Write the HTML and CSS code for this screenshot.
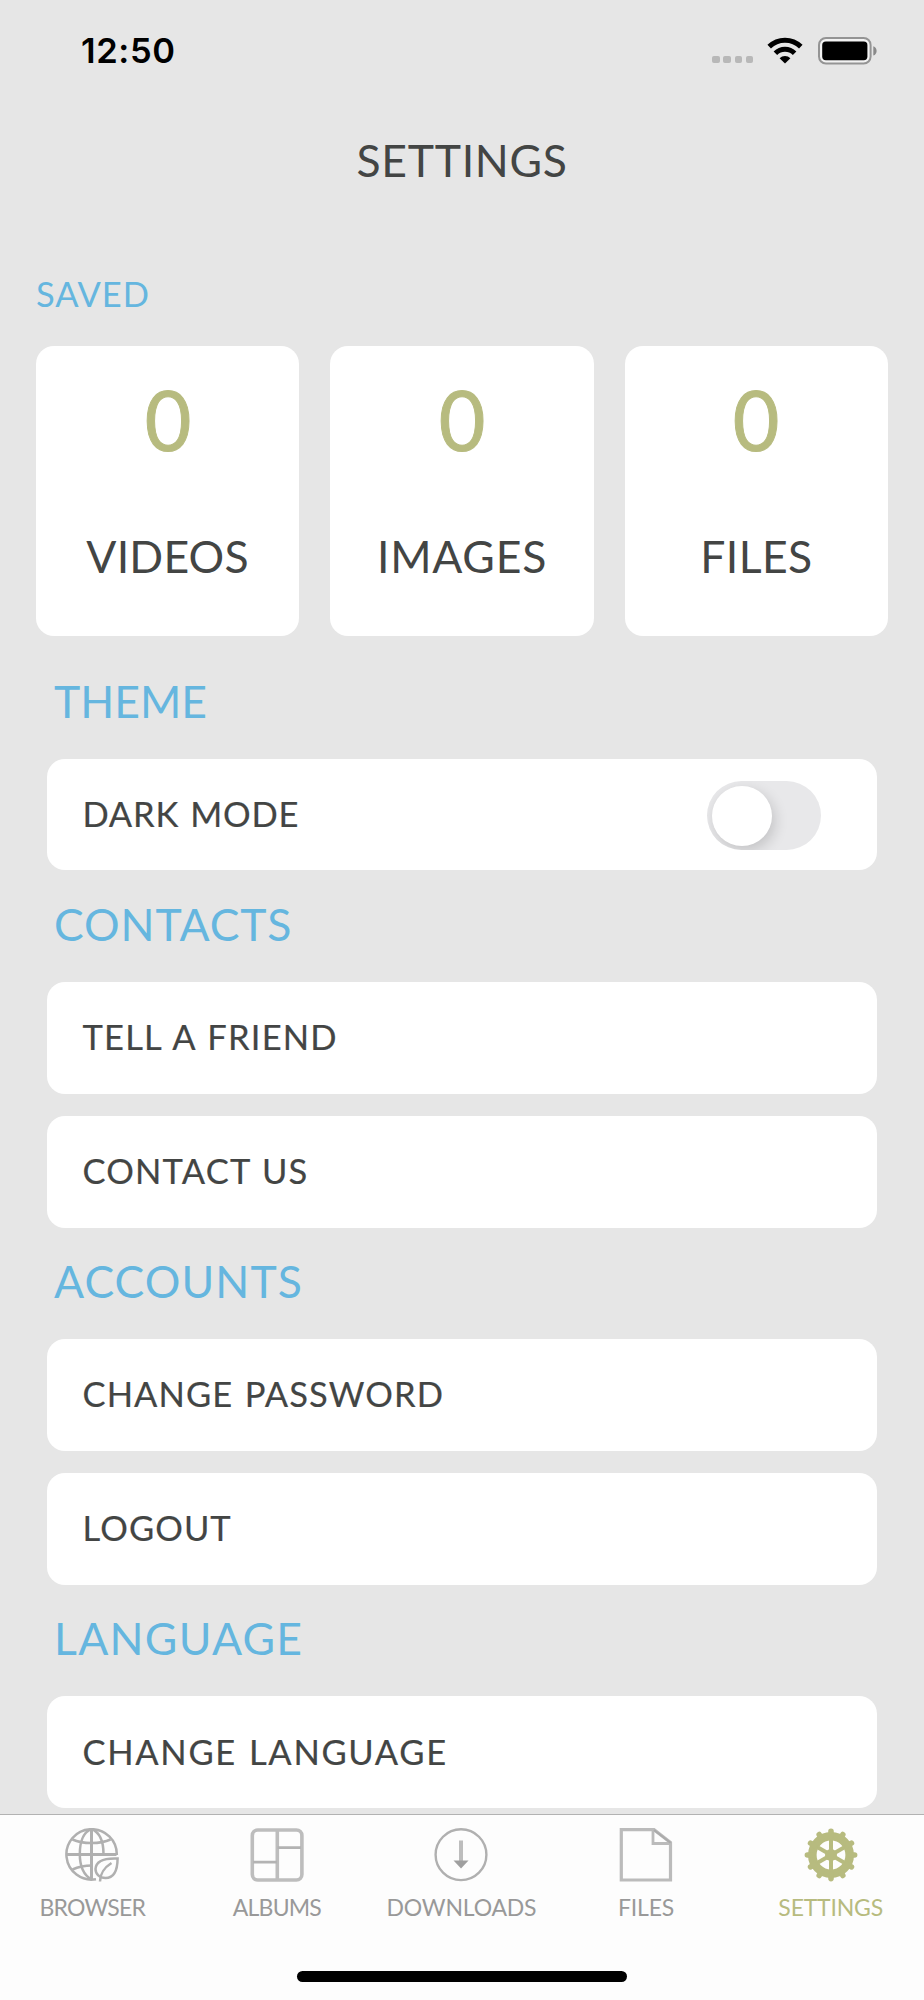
FILE: index.html
```html
<!DOCTYPE html>
<html lang="en">
<head>
  <meta charset="UTF-8">
  <title>Settings</title>
  <link rel="stylesheet" href="styles.css">
</head>
<body>
  <div class="screen">
    <div class="status-bar">
      <span class="time">12:50</span>
      <div class="status-icons">
        <div class="signal"><i></i><i></i><i></i><i></i></div>
        <svg class="wifi" width="36" height="27" viewBox="0 0 36 27">
          <g fill="none" stroke="#000" stroke-width="5">
            <path d="M2.2 9.6A22.6 22.6 0 0 1 33.8 9.6"/>
            <path d="M8.4 16.2A13.6 13.6 0 0 1 27.6 16.2"/>
          </g>
          <path d="M12.6 21.2a8 8 0 0 1 10.8 0L18 26.6z"/>
        </svg>
        <svg class="battery" width="60" height="28" viewBox="0 0 60 28">
          <rect x="1" y="1" width="51.6" height="25.6" rx="7" fill="#f2f2f2" stroke="#949494" stroke-width="2"/>
          <rect x="4.2" y="4.4" width="45.2" height="18.8" rx="3.6"/>
          <path d="M55.3 9.2c4.4 1.4 4.4 8 0 9.4z" fill="#8a8a8a"/>
        </svg>
      </div>
    </div>

    <h1>SETTINGS</h1>

    <div class="content">
      <h2 class="saved-title">SAVED</h2>
      <div class="cards">
        <div class="card"><span class="count">0</span><span class="card-label videos">VIDEOS</span></div>
        <div class="card"><span class="count">0</span><span class="card-label">IMAGES</span></div>
        <div class="card"><span class="count">0</span><span class="card-label files">FILES</span></div>
      </div>

      <div class="section">
        <h2>THEME</h2>
        <div class="row"><span>DARK MODE</span><div class="switch"><div class="knob"></div></div></div>
      </div>
      <div class="section contacts">
        <h2>CONTACTS</h2>
        <div class="row"><span>TELL A FRIEND</span></div>
        <div class="row"><span>CONTACT US</span></div>
      </div>
      <div class="section accounts">
        <h2>ACCOUNTS</h2>
        <div class="row"><span>CHANGE PASSWORD</span></div>
        <div class="row"><span>LOGOUT</span></div>
      </div>
      <div class="section language">
        <h2>LANGUAGE</h2>
        <div class="row"><span>CHANGE LANGUAGE</span></div>
      </div>
    </div>

    <div class="tab-bar">
      <div class="tabs">
        <a class="tab tight">
          <svg width="54" height="54" viewBox="0 0 54 54" fill="none" stroke="#b0b0b0" stroke-width="2.5">
            <path d="M51.8 27A25.2 25.2 0 1 0 31 51.2"/>
            <path d="M26.5 1v50.5M1 26.5h50.5" stroke-width="3"/>
            <path d="M26.5 1C18 4 14.8 15 14.8 26s3.700 21 11.700 25.400M26.500 1C34 4 38.500 13 38.500 26"/>
            <path d="M7.500 11.500Q15 15 26.500 15T45.500 11.500M7.500 41.500Q16 37.500 27 37.500"/>
            <path d="M52.600 30.500C41 30 31 32 30.500 41c0 5 4 9 10 9 9.500 0 12-9 12.100-19.500z" fill="#fdfdfd"/>
            <path d="M35 53.500C35 46 40 39 46.500 35"/>
          </svg>
          <span>BROWSER</span>
        </a>
        <a class="tab tight">
          <svg width="54" height="54" viewBox="0 0 54 54" fill="none" stroke="#bdbdbd" stroke-width="3.6">
            <rect x="2.3" y="2" width="49.6" height="50" rx="5.5"/>
            <path d="M27.3 2v50"/>
            <path d="M3 34.2h24M27.5 19.6H51" stroke="#b3b3b3" stroke-width="2.8"/>
          </svg>
          <span>ALBUMS</span>
        </a>
        <a class="tab">
          <svg width="54" height="54" viewBox="0 0 54 54">
            <circle cx="27" cy="26.7" r="25.4" fill="none" stroke="#b0b0b0" stroke-width="2.4"/>
            <path d="M27 12.5V34" stroke="#bdbdbd" stroke-width="4"/>
            <path d="M19.5 32.5h15L27 40.5z" fill="#9f9f9f"/>
          </svg>
          <span>DOWNLOADS</span>
        </a>
        <a class="tab">
          <svg width="54" height="54" viewBox="0 0 54 54" fill="none" stroke="#bbb" stroke-width="3.2">
            <path d="M2.3 1.7H35L51.5 14.5V52H2.3z"/>
            <path d="M34 2v13.5h17" stroke-width="2.8"/>
            <path d="M35 2l16.5 12.8" stroke="#ababab" stroke-width="2"/>
          </svg>
          <span>FILES</span>
        </a>
        <a class="tab active">
          <svg width="54" height="54" viewBox="-27 -27 54 54" fill="none" stroke="#b7bb7f">
            <circle r="18.7" stroke-width="8.6"/>
            <g stroke-width="4">
              <path d="M0-16V16"/>
              <path d="M0-16V16" transform="rotate(60)"/>
              <path d="M0-16V16" transform="rotate(120)"/>
            </g>
            <circle r="6" fill="#b7bb7f" stroke="none"/>
            <g stroke-width="5.6" stroke-linecap="round">
              <path d="M0-23.6v4M0 23.6v-4"/>
              <path d="M0-23.6v4M0 23.6v-4" transform="rotate(30)"/>
              <path d="M0-23.6v4M0 23.6v-4" transform="rotate(60)"/>
              <path d="M0-23.6v4M0 23.6v-4" transform="rotate(90)"/>
              <path d="M0-23.6v4M0 23.6v-4" transform="rotate(120)"/>
              <path d="M0-23.6v4M0 23.6v-4" transform="rotate(150)"/>
            </g>
          </svg>
          <span>SETTINGS</span>
        </a>
      </div>
      <div class="home-indicator"></div>
    </div>
  </div>
</body>
</html>
```
FILE: styles.css
```css
* { box-sizing: border-box; }
body { margin: 0; background: #e6e6e6; font-family: Lato, 'Liberation Sans', sans-serif; color: #434544; }
h1, h2 { margin: 0; font-weight: 400; }
svg { display: block; }
.screen { width: 924px; height: 2000px; display: flex; flex-direction: column; overflow: hidden; }

.status-bar { height: 100px; flex: none; display: flex; justify-content: space-between; padding: 0 46px 0 81px; }
.time { font-family: Inter, sans-serif; font-weight: 600; font-size: 34.5px; line-height: 40px; letter-spacing: 0.6px; padding-top: 31px; color: #000; }
.status-icons { display: flex; align-items: flex-start; padding-top: 37px; }
.signal { display: flex; gap: 3.7px; padding-top: 19px; margin-right: 14px; }
.signal i { width: 7.4px; height: 7.4px; border-radius: 2px; background: #b8b8b8; }
.wifi { margin-right: 15px; }

h1 { flex: none; height: 122px; font-size: 44.5px; line-height: 120px; text-align: center; letter-spacing: 0.7px; }

.content { flex: 1; min-height: 0; overflow: hidden; padding: 0 36px; }
h2 { color: #65b6df; }
.saved-title { height: 124px; font-size: 34.5px; line-height: 40px; letter-spacing: 0.9px; padding-top: 52px; }
.cards { display: flex; gap: 31.3px; }
.card { flex: 1; height: 290px; background: #fff; border-radius: 18px; display: flex; flex-direction: column; align-items: center; }
.count { color: #b7bb7f; font-size: 83px; line-height: 100px; padding-top: 23px; transform: scaleX(0.97); -webkit-text-stroke: 1px #b7bb7f; }
.card-label { font-size: 44.5px; line-height: 54px; margin-top: 60px; letter-spacing: 0.8px; }
.card-label.videos { letter-spacing: 0.2px; }
.card-label.files { letter-spacing: 0.4px; }

.section { padding: 0 11px; display: flex; flex-direction: column; gap: 22.32px; }
.section h2 { height: 67px; font-size: 44.5px; line-height: 54px; padding: 4px 0 0 7px; }
.cards + .section { margin-top: 33.5px; }
.section + .section { margin-top: 22.3px; }
.contacts h2 { letter-spacing: 0.9px; }
.accounts h2 { letter-spacing: 1.1px; }
.language h2 { letter-spacing: 1.3px; }
.row { height: 111.6px; background: #fff; border-radius: 18px; display: flex; align-items: center; justify-content: space-between; padding: 0 56px 0 35.5px; font-size: 34.5px; letter-spacing: 0.8px; word-spacing: 1.5px; -webkit-text-stroke: 0.2px #434544; }
.row span { padding-bottom: 2px; }
.contacts .row { letter-spacing: 1.2px; }
.accounts .row { letter-spacing: 1.1px; }
.language .row { letter-spacing: 1.7px; }
.switch { width: 114px; height: 69px; margin-top: 2px; border-radius: 35px; background: #e8e8ea; padding: 4.5px; overflow: hidden; }
.knob { width: 60px; height: 60px; border-radius: 50%; background: #fff; box-shadow: 3px 5px 14px rgba(0,0,0,0.16); }

.tab-bar { height: 186px; flex: none; background: #fdfdfd; border-top: 1px solid #b2b2b2; display: flex; flex-direction: column; align-items: center; justify-content: space-between; padding-bottom: 18px; }
.tabs { width: 100%; display: flex; padding: 13px 1px 0 0; }
.tab { flex: 1 1 0; min-width: 0; display: flex; flex-direction: column; align-items: center; font-size: 23px; line-height: 28px; letter-spacing: -0.2px; color: #999; }
.tab span { margin-top: 11px; }
.tab.tight { letter-spacing: -0.8px; }
.tab.active { color: #b7bb7f; }
.home-indicator { width: 330px; height: 11px; border-radius: 6px; background: #000; }
```
